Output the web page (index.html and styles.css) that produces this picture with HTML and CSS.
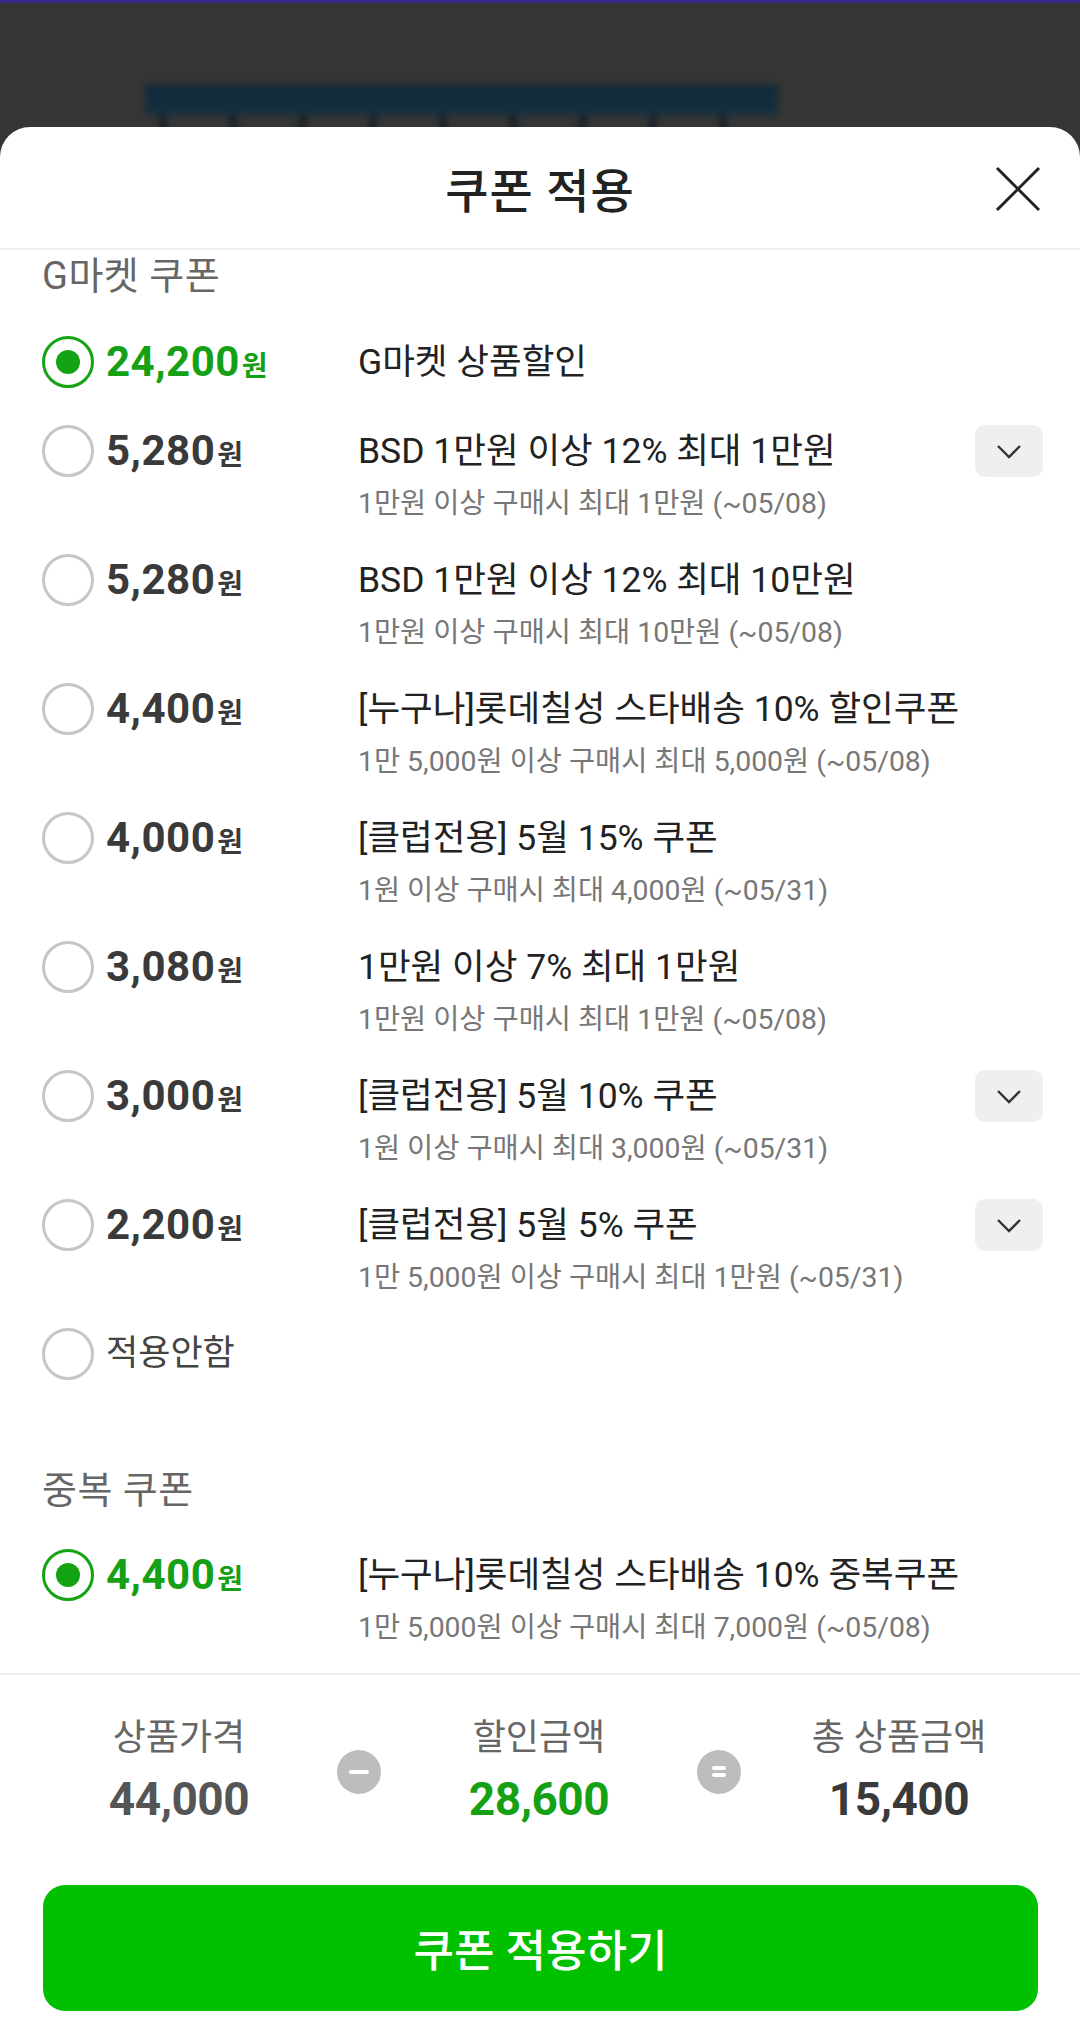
FILE: index.html
```html
<!DOCTYPE html>
<html lang="ko">
<head>
    <meta charset="UTF-8">
    <meta name="viewport" content="width=device-width, initial-scale=1.0">
    <title>쿠폰 적용</title>
    <link rel="stylesheet" href="styles.css">
</head>
<body>
    <div class="backdrop">
        <div class="blur-strip"></div>
    </div>

    <div class="sheet">
        <div class="sheet-header">
            <h1>쿠폰 적용</h1>
            <button class="close" aria-label="닫기">
                <svg width="48" height="48" viewBox="0 0 48 48"><path d="M3 3 L45 45 M45 3 L3 45" stroke="#222" stroke-width="3" fill="none"/></svg>
            </button>
        </div>

        <div class="sheet-body">
            <div class="section-label">G마켓 쿠폰</div>

            <div class="coupon selected">
                <span class="radio"></span>
                <div class="amount">24,200<small>원</small></div>
                <div class="info">
                    <div class="title">G마켓 상품할인</div>
                </div>
            </div>

            <div class="coupon">
                <span class="radio"></span>
                <div class="amount">5,280<small>원</small></div>
                <div class="info">
                    <div class="title">BSD 1만원 이상 12% 최대 1만원</div>
                    <div class="desc">1만원 이상 구매시 최대 1만원 (~05/08)</div>
                </div>
                <button class="more"><svg width="26" height="15" viewBox="0 0 26 15"><polyline points="2,2 13,13 24,2" stroke="#333" stroke-width="2.4" fill="none"/></svg></button>
            </div>

            <div class="coupon">
                <span class="radio"></span>
                <div class="amount">5,280<small>원</small></div>
                <div class="info">
                    <div class="title">BSD 1만원 이상 12% 최대 10만원</div>
                    <div class="desc">1만원 이상 구매시 최대 10만원 (~05/08)</div>
                </div>
            </div>

            <div class="coupon">
                <span class="radio"></span>
                <div class="amount">4,400<small>원</small></div>
                <div class="info">
                    <div class="title">[누구나]롯데칠성 스타배송 10% 할인쿠폰</div>
                    <div class="desc">1만 5,000원 이상 구매시 최대 5,000원 (~05/08)</div>
                </div>
            </div>

            <div class="coupon">
                <span class="radio"></span>
                <div class="amount">4,000<small>원</small></div>
                <div class="info">
                    <div class="title">[클럽전용] 5월 15% 쿠폰</div>
                    <div class="desc">1원 이상 구매시 최대 4,000원 (~05/31)</div>
                </div>
            </div>

            <div class="coupon">
                <span class="radio"></span>
                <div class="amount">3,080<small>원</small></div>
                <div class="info">
                    <div class="title">1만원 이상 7% 최대 1만원</div>
                    <div class="desc">1만원 이상 구매시 최대 1만원 (~05/08)</div>
                </div>
            </div>

            <div class="coupon">
                <span class="radio"></span>
                <div class="amount">3,000<small>원</small></div>
                <div class="info">
                    <div class="title">[클럽전용] 5월 10% 쿠폰</div>
                    <div class="desc">1원 이상 구매시 최대 3,000원 (~05/31)</div>
                </div>
                <button class="more"><svg width="26" height="15" viewBox="0 0 26 15"><polyline points="2,2 13,13 24,2" stroke="#333" stroke-width="2.4" fill="none"/></svg></button>
            </div>

            <div class="coupon">
                <span class="radio"></span>
                <div class="amount">2,200<small>원</small></div>
                <div class="info">
                    <div class="title">[클럽전용] 5월 5% 쿠폰</div>
                    <div class="desc">1만 5,000원 이상 구매시 최대 1만원 (~05/31)</div>
                </div>
                <button class="more"><svg width="26" height="15" viewBox="0 0 26 15"><polyline points="2,2 13,13 24,2" stroke="#333" stroke-width="2.4" fill="none"/></svg></button>
            </div>

            <div class="coupon">
                <span class="radio"></span>
                <div class="none-label">적용안함</div>
            </div>

            <div class="section-label second">중복 쿠폰</div>

            <div class="coupon selected">
                <span class="radio"></span>
                <div class="amount">4,400<small>원</small></div>
                <div class="info">
                    <div class="title">[누구나]롯데칠성 스타배송 10% 중복쿠폰</div>
                    <div class="desc">1만 5,000원 이상 구매시 최대 7,000원 (~05/08)</div>
                </div>
            </div>
        </div>

        <div class="sheet-footer">
            <div class="summary">
                <div class="sum-col">
                    <div class="sum-label">상품가격</div>
                    <div class="sum-value">44,000</div>
                </div>
                <div class="op"><span class="minus"></span></div>
                <div class="sum-col">
                    <div class="sum-label">할인금액</div>
                    <div class="sum-value green">28,600</div>
                </div>
                <div class="op"><span class="equals"></span></div>
                <div class="sum-col">
                    <div class="sum-label">총 상품금액</div>
                    <div class="sum-value dark">15,400</div>
                </div>
            </div>
            <button class="apply">쿠폰 적용하기</button>
        </div>
    </div>
</body>
</html>
```

FILE: styles.css
```css
* {
    box-sizing: border-box;
}
body {
    margin: 0;
    width: 1080px;
    height: 2032px;
    overflow: hidden;
    background: #353535;
    font-family: Roboto, "Noto Sans CJK KR", sans-serif;
    color: #222;
}
button {
    font-family: inherit;
    border: none;
    background: none;
    padding: 0;
    cursor: pointer;
}

/* dimmed page behind the sheet */
.backdrop {
    height: 127px;
    border-top: 3px solid #3a2888;
    padding: 82px 0 0 145px;
    overflow: hidden;
}
.blur-strip {
    width: 633px;
    height: 60px;
    background:
        linear-gradient(#10293a 0, #163040 30px, transparent 30px),
        repeating-linear-gradient(90deg, transparent 0, transparent 14px, #1a2228 14px, #1a2228 22px, transparent 22px, transparent 70px);
    filter: blur(3px);
}

/* bottom sheet */
.sheet {
    height: 1905px;
    background: #fff;
    border-radius: 30px 30px 0 0;
    display: flex;
    flex-direction: column;
    overflow: hidden;
}
.sheet-header {
    height: 123px;
    flex-shrink: 0;
    border-bottom: 2px solid #f0f0f0;
    display: flex;
    align-items: center;
    justify-content: center;
    position: relative;
}
.sheet-header h1 {
    margin: 0;
    font-size: 47px;
    font-weight: 500;
    color: #222;
    letter-spacing: 1px;
}
.close {
    position: absolute;
    right: 38px;
    top: 38px;
    width: 48px;
    height: 48px;
}

.sheet-body {
    flex: 1;
    overflow: hidden;
    padding: 0 37px 0 42px;
}
.section-label {
    font-size: 38px;
    line-height: 52px;
    color: #666;
    margin-bottom: 34px;
    letter-spacing: 0.5px;
}
.section-label.second {
    margin-top: 47px;
    margin-bottom: 33px;
}

.coupon {
    display: flex;
    align-items: flex-start;
    min-height: 89px;
    padding-bottom: 29px;
}
.radio {
    width: 52px;
    height: 52px;
    flex-shrink: 0;
    border: 3px solid #c6c6c6;
    border-radius: 50%;
    margin-right: 12px;
    display: flex;
    align-items: center;
    justify-content: center;
}
.coupon.selected .radio {
    border-color: #13a313;
}
.coupon.selected .radio::after {
    content: "";
    width: 24px;
    height: 24px;
    border-radius: 50%;
    background: #13a313;
}
.amount {
    width: 252px;
    flex-shrink: 0;
    font-size: 42px;
    line-height: 52px;
    font-weight: 700;
    color: #3a3a3a;
    letter-spacing: 0.5px;
}
.amount small {
    font-size: 28px;
    font-weight: 700;
    margin-left: 2px;
    letter-spacing: 0;
}
.coupon.selected .amount {
    color: #15a015;
}
.none-label {
    font-size: 35px;
    line-height: 52px;
    color: #444;
}
.info {
    flex: 1;
    min-width: 0;
}
.title {
    font-size: 35.5px;
    line-height: 52px;
    color: #222;
    white-space: nowrap;
}
.desc {
    margin-top: 6px;
    font-size: 28.4px;
    line-height: 42px;
    color: #777;
    white-space: nowrap;
}
.more {
    width: 68px;
    height: 52px;
    flex-shrink: 0;
    background: #efefef;
    border-radius: 10px;
    display: flex;
    align-items: center;
    justify-content: center;
}

/* footer with totals */
.sheet-footer {
    flex-shrink: 0;
    border-top: 2px solid #eee;
    padding: 41px 42px 21px 43px;
}
.summary {
    display: grid;
    grid-template-columns: 270px 44px 270px 44px 270px;
    column-gap: 23px;
    align-items: center;
    margin-left: 1px;
}
.sum-col {
    text-align: center;
}
.sum-label {
    font-size: 36px;
    line-height: 44px;
    color: #666;
}
.sum-value {
    margin-top: 11px;
    font-size: 46px;
    line-height: 56px;
    font-weight: 700;
    color: #555;
    letter-spacing: -0.5px;
}
.sum-value.green {
    color: #15a015;
}
.sum-value.dark {
    color: #3a3a3a;
}
.op {
    width: 44px;
    height: 44px;
    border-radius: 50%;
    background: #bdbdbd;
    display: flex;
    flex-direction: column;
    align-items: center;
    justify-content: center;
}
.minus,
.equals {
    display: block;
    width: 20px;
    height: 4px;
    background: #fff;
    border-radius: 2px;
}
.equals {
    box-shadow: 0 -7px 0 #fff;
    margin-top: 7px;
    width: 14px;
}
.apply {
    display: block;
    width: 995px;
    height: 126px;
    margin-top: 58px;
    background: #00c000;
    color: #fff;
    border-radius: 22px;
    font-size: 44px;
    font-weight: 500;
}
```
